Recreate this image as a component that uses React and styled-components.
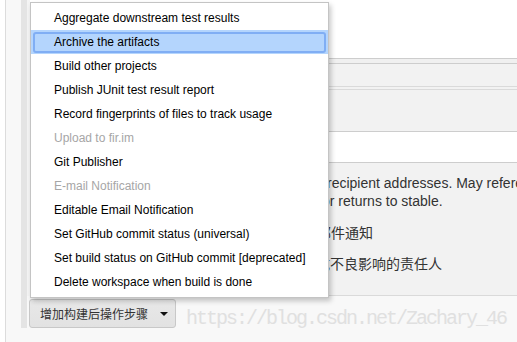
import styled, { createGlobalStyle } from 'styled-components';

const GlobalStyle = createGlobalStyle`
  html, body {
    margin: 0;
    padding: 0;
  }
  body {
    font-family: "Liberation Sans", Arial, sans-serif;
    color: #333;
  }
`;

const Page = styled.div`
  position: relative;
  width: 517px;
  height: 342px;
  overflow: hidden;
  display: flex;
  background: #fff;
`;

const Edge = styled.div`
  width: 5px;
  flex: none;
  border-right: 1px solid #dcdcdc;
`;

const Main = styled.div`
  flex: 1;
  min-width: 0;
  background: #f8f8f8;
  padding: 0 0 14px 15px;
  display: flex;
  flex-direction: column;
`;

const Section = styled.div`
  flex: 1;
  border-left: 6px solid #e4e4e4;
  background: #f4f4f4;
  display: flex;
  flex-direction: column;
`;

const Row = styled.div`
  flex: none;
  height: ${p => p.$h}px;
  margin-left: 3px;
  background: ${p => p.$bg || '#f2f2f2'};
  border-bottom: 1px solid ${p => p.$line || '#cdcdcd'};
`;

const Fields = styled(Row)`
  box-sizing: content-box;
  padding: 11px 0 0 286px;
  height: 121px;
  display: flex;
  flex-direction: column;
  white-space: nowrap;
  overflow: hidden;
`;

const HelpLine = styled.div`
  font-size: 14px;
  line-height: 18px;
  margin-left: ${p => p.$indent || 0}px;
`;

const CheckLine = styled.div`
  font-family: "Noto Sans CJK SC", sans-serif;
  font-size: 14px;
  line-height: 18px;
  margin-top: 13px;
  margin-left: ${p => p.$indent || 0}px;
`;

const Footer = styled.div`
  flex: 1;
  background: #f8f8f8;
  padding: 3px 0 0 2px;
`;

const AddButton = styled.button`
  display: inline-flex;
  align-items: center;
  box-sizing: border-box;
  height: 29px;
  padding: 0 7px 0 10px;
  border: 1px solid #c8c8c8;
  border-radius: 3px;
  background: linear-gradient(#e8e8e8, #e2e2e2);
  color: #333;
  font-family: "Noto Sans CJK SC", sans-serif;
  font-size: 12px;
  cursor: pointer;
`;

const Caret = styled.span`
  width: 0;
  height: 0;
  margin-left: 12px;
  border-left: 4px solid transparent;
  border-right: 4px solid transparent;
  border-top: 4px solid #111;
`;

const Menu = styled.ul`
  position: absolute;
  left: 30px;
  top: 2px;
  width: 297px;
  margin: 0;
  padding: 3px 0;
  list-style: none;
  background: #fff;
  border: 1px solid #c4c4c4;
  box-shadow: 2px 3px 5px rgba(0, 0, 0, 0.22);
`;

const Item = styled.li`
  position: relative;
  height: 24px;
  line-height: 24px;
  padding-left: 23px;
  font-size: 12px;
  color: ${p => (p.$disabled ? '#a6a6a6' : '#000')};
  background: ${p => (p.$active ? '#b4d5fd' : 'transparent')};

  &::after {
    content: '';
    display: ${p => (p.$active ? 'block' : 'none')};
    position: absolute;
    inset: 2px 2px 1px 2px;
    border: 2px solid #80aef4;
    border-radius: 3px;
  }
`;

const Watermark = styled.div`
  position: absolute;
  left: 186px;
  top: 307px;
  font-family: "Liberation Mono", monospace;
  font-size: 20px;
  letter-spacing: -2px;
  line-height: 24px;
  color: #e0e0e0;
  pointer-events: none;
`;

const items = [
  { label: 'Aggregate downstream test results' },
  { label: 'Archive the artifacts', active: true },
  { label: 'Build other projects' },
  { label: 'Publish JUnit test result report' },
  { label: 'Record fingerprints of files to track usage' },
  { label: 'Upload to fir.im', disabled: true },
  { label: 'Git Publisher' },
  { label: 'E-mail Notification', disabled: true },
  { label: 'Editable Email Notification' },
  { label: 'Set GitHub commit status (universal)' },
  { label: 'Set build status on GitHub commit [deprecated]' },
  { label: 'Delete workspace when build is done' },
];

const App = () => {
  return (
    <Page>
      <GlobalStyle />
      <Edge />
      <Main>
        <Section>
          <Row $h={58} $bg="#fff" />
          <Row $h={4} $bg="#f0f0f0" />
          <Row $h={22} $line="#dadada" />
          <Row $h={2} $line="#dadada" />
          <Row $h={41} />
          <Row $h={30} $bg="#fff" />
          <Fields $line="#dadada">
            <HelpLine $indent={11}>recipient addresses. May reference build parameters like $PARAM.</HelpLine>
            <HelpLine $indent={6}>or returns to stable.</HelpLine>
            <CheckLine $indent={1}>邮件通知</CheckLine>
            <CheckLine>成不良影响的责任人</CheckLine>
          </Fields>
          <Footer>
            <AddButton>
              增加构建后操作步骤
              <Caret />
            </AddButton>
          </Footer>
        </Section>
      </Main>
      <Menu>
        {items.map(it => (
          <Item key={it.label} $active={it.active} $disabled={it.disabled}>
            {it.label}
          </Item>
        ))}
      </Menu>
      <Watermark>https://blog.csdn.net/Zachary_46</Watermark>
    </Page>
  );
};

export default App;
